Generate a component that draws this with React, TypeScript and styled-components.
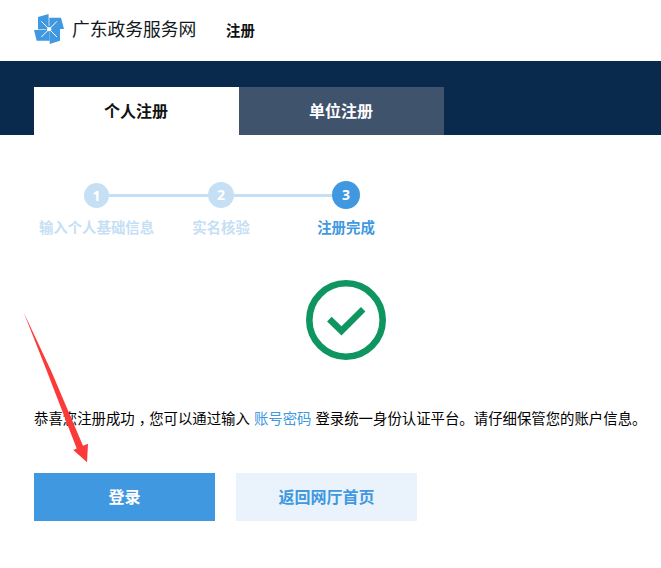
import React from 'react';
import styled, { createGlobalStyle } from 'styled-components';

const GlobalStyle = createGlobalStyle`
  * { box-sizing: border-box; }
  body {
    margin: 0;
    background: #fff;
    color: #000;
    font-family: "Liberation Sans", "Noto Sans CJK SC", sans-serif;
    font-size: 14.4px;
  }
`;

const Page = styled.div`
  position: relative;
  height: 568px;
  overflow: hidden;
`;

const Header = styled.header`
  display: flex;
  align-items: center;
  height: 61px;
  padding: 0 34px;
`;

const LogoMark = styled.svg`
  width: 30px;
  height: 30px;
  margin: 0 8px 3px 0;
`;

const SiteName = styled.span`
  width: 154px;
  padding-bottom: 2px;
  font-size: 17.75px;
  line-height: 26px;
  color: #101820;
  white-space: nowrap;
`;

const PageName = styled.span`
  font-weight: 700;
  line-height: 22px;
  color: #111;
`;

const TabBar = styled.nav`
  display: flex;
  height: 74px;
  padding: 26px 34px 0;
  background: #0a2a4d;
`;

const Tab = styled.a<{ $active?: boolean }>`
  width: 205px;
  height: 48px;
  padding: 1px 1px 0 0;
  line-height: 48px;
  text-align: center;
  font-size: 16px;
  font-weight: 700;
  color: ${(p) => (p.$active ? '#111' : '#fff')};
  background: ${(p) => (p.$active ? '#fff' : '#40536d')};
`;

const Content = styled.main`
  padding: 46px 0 0 34px;
`;

const Steps = styled.ol`
  display: flex;
  margin: 0;
  padding: 0;
  list-style: none;
`;

const Step = styled.li<{ $active?: boolean; $width: number }>`
  width: ${(p) => p.$width}px;
  text-align: center;
  white-space: nowrap;
  font-weight: 700;
  color: ${(p) => (p.$active ? '#4098e0' : '#c5e0f5')};
`;

const Marker = styled.div`
  display: flex;
  align-items: center;
  height: 28px;
`;

const Line = styled.span<{ $visible: boolean }>`
  flex: 1;
  height: 3px;
  background: ${(p) => (p.$visible ? '#c5e0f5' : 'transparent')};
`;

const Dot = styled.span<{ $active?: boolean; $size: number }>`
  width: ${(p) => p.$size}px;
  height: ${(p) => p.$size}px;
  line-height: ${(p) => p.$size}px;
  border-radius: 50%;
  font-family: "Open Sans", sans-serif;
  font-size: 14px;
  color: #fff;
  background: ${(p) => (p.$active ? '#4098e0' : '#c5e0f5')};
`;

const StepLabel = styled.div`
  margin-top: 8px;
  line-height: 22px;
`;

const SuccessIcon = styled.svg`
  display: block;
  width: 80px;
  height: 80px;
  margin: 41px 0 48px 272px;
`;

const Message = styled.p`
  margin: 0;
  line-height: 22px;
  white-space: nowrap;
`;

const Comma = styled.span`
  font-feature-settings: "halt";
  padding: 0 3.2px 0 4px;
`;

const Highlight = styled.span`
  color: #4098e0;
`;

const Actions = styled.div`
  display: flex;
  gap: 21px;
  margin-top: 43px;
`;

const Button = styled.button<{ $primary?: boolean }>`
  width: 181px;
  height: 48px;
  padding: 0 0 2px 0;
  border: 0;
  font: inherit;
  font-size: 16px;
  font-weight: 700;
  color: ${(p) => (p.$primary ? '#fff' : '#4098e0')};
  background: ${(p) => (p.$primary ? '#4098e0' : '#eaf3fb')};
`;

const Pointer = styled.svg`
  position: absolute;
  left: 22px;
  top: 311px;
  width: 70px;
  height: 155px;
  pointer-events: none;
`;

const steps = [
  { label: '输入个人基础信息', width: 125, dot: 25 },
  { label: '实名核验', width: 124, dot: 26 },
  { label: '注册完成', width: 126, dot: 28 },
];

export default function App() {
  return (
    <Page>
      <GlobalStyle />
      <Header>
        <LogoMark viewBox="30 30 90 90">
          <g fill="#4098e0">
            <path d="M42 39L74 30V77H42Z" />
            <path d="M77 41H111L120 75H74V41Z" />
            <path d="M74 75H108V110L77 120V75Z" />
            <path d="M30 78H77V110H38Z" />
            <path d="M66 66H84V84H66Z" />
          </g>
          <path d="M75.5 30V66M30 76.5H66" stroke="#fff" strokeWidth="1.8" opacity=".8" />
          <path d="M52 52L99 99M99 52L52 99" stroke="#fff" strokeWidth="3" />
          <circle cx="75.5" cy="75.5" r="6.5" fill="#fff" />
        </LogoMark>
        <SiteName>广东政务服务网</SiteName>
        <PageName>注册</PageName>
      </Header>
      <TabBar>
        <Tab $active>个人注册</Tab>
        <Tab>单位注册</Tab>
      </TabBar>
      <Content>
        <Steps>
          {steps.map(({ label, width, dot }, i) => {
            const active = i === steps.length - 1;
            return (
              <Step key={label} $active={active} $width={width}>
                <Marker>
                  <Line $visible={i > 0} />
                  <Dot $active={active} $size={dot}>{i + 1}</Dot>
                  <Line $visible={!active} />
                </Marker>
                <StepLabel>{label}</StepLabel>
              </Step>
            );
          })}
        </Steps>
        <SuccessIcon viewBox="0 0 80 80" fill="#0f9560">
          <circle cx="40" cy="40" r="36.7" fill="none" stroke="#0f9560" strokeWidth="6.6" />
          <path d="M21.1 41.4L25.6 36.8L35.5 46.3L55 26.9L59.4 31.4L35.5 55.6Z" />
        </SuccessIcon>
        <Message>
          恭喜您注册成功<Comma>，</Comma>您可以通过输入 <Highlight>账号密码</Highlight> 登录统一身份认证平台。请仔细保管您的账户信息。
        </Message>
        <Actions>
          <Button $primary>登录</Button>
          <Button>返回网厅首页</Button>
        </Actions>
      </Content>
      <Pointer viewBox="22 311 70 155">
        <path d="M23.7 312.5L51.2 371L83 445.7L88 443.8L87 462.3L73.3 450L76.7 448.5L46.8 371Z" fill="#fc3a3a" />
      </Pointer>
    </Page>
  );
}
